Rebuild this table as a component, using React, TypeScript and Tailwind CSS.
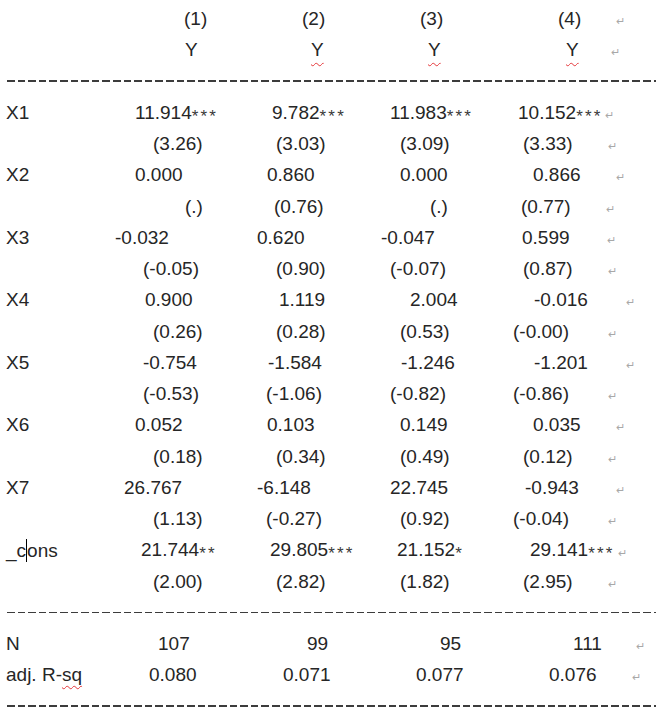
import React from "react";

type Cell = { x: number; t: string; s?: string; wavy?: boolean; caret?: boolean };
type Row = { kind: "text"; cells: Cell[]; ret?: number } | { kind: "dash" };

const rows: Row[] = [
  { kind: "text", cells: [{ x: 184, t: "(1)" }, { x: 302, t: "(2)" }, { x: 420, t: "(3)" }, { x: 558, t: "(4)" }], ret: 616 },
  { kind: "text", cells: [{ x: 185, t: "Y" }, { x: 311, t: "Y", wavy: true }, { x: 428, t: "Y", wavy: true }, { x: 566, t: "Y", wavy: true }], ret: 611 },
  { kind: "dash" },
  { kind: "text", cells: [{ x: 6, t: "X1" }, { x: 135, t: "11.914", s: "***" }, { x: 272, t: "9.782", s: "***" }, { x: 390, t: "11.983", s: "***" }, { x: 518, t: "10.152", s: "***" }], ret: 605 },
  { kind: "text", cells: [{ x: 153, t: "(3.26)" }, { x: 276, t: "(3.03)" }, { x: 400, t: "(3.09)" }, { x: 523, t: "(3.33)" }], ret: 608 },
  { kind: "text", cells: [{ x: 6, t: "X2" }, { x: 135, t: "0.000" }, { x: 267, t: "0.860" }, { x: 400, t: "0.000" }, { x: 533, t: "0.866" }], ret: 616 },
  { kind: "text", cells: [{ x: 185, t: "(.)" }, { x: 274, t: "(0.76)" }, { x: 430, t: "(.)" }, { x: 521, t: "(0.77)" }], ret: 606 },
  { kind: "text", cells: [{ x: 6, t: "X3" }, { x: 115, t: "-0.032" }, { x: 257, t: "0.620" }, { x: 381, t: "-0.047" }, { x: 522, t: "0.599" }], ret: 607 },
  { kind: "text", cells: [{ x: 143, t: "(-0.05)" }, { x: 276, t: "(0.90)" }, { x: 390, t: "(-0.07)" }, { x: 523, t: "(0.87)" }], ret: 608 },
  { kind: "text", cells: [{ x: 6, t: "X4" }, { x: 145, t: "0.900" }, { x: 279, t: "1.119" }, { x: 410, t: "2.004" }, { x: 534, t: "-0.016" }], ret: 626 },
  { kind: "text", cells: [{ x: 153, t: "(0.26)" }, { x: 276, t: "(0.28)" }, { x: 400, t: "(0.53)" }, { x: 513, t: "(-0.00)" }], ret: 608 },
  { kind: "text", cells: [{ x: 6, t: "X5" }, { x: 143, t: "-0.754" }, { x: 268, t: "-1.584" }, { x: 401, t: "-1.246" }, { x: 534, t: "-1.201" }], ret: 626 },
  { kind: "text", cells: [{ x: 143, t: "(-0.53)" }, { x: 266, t: "(-1.06)" }, { x: 390, t: "(-0.82)" }, { x: 513, t: "(-0.86)" }], ret: 608 },
  { kind: "text", cells: [{ x: 6, t: "X6" }, { x: 135, t: "0.052" }, { x: 267, t: "0.103" }, { x: 400, t: "0.149" }, { x: 533, t: "0.035" }], ret: 616 },
  { kind: "text", cells: [{ x: 153, t: "(0.18)" }, { x: 276, t: "(0.34)" }, { x: 400, t: "(0.49)" }, { x: 523, t: "(0.12)" }], ret: 608 },
  { kind: "text", cells: [{ x: 6, t: "X7" }, { x: 124, t: "26.767" }, { x: 257, t: "-6.148" }, { x: 390, t: "22.745" }, { x: 525, t: "-0.943" }], ret: 616 },
  { kind: "text", cells: [{ x: 153, t: "(1.13)" }, { x: 266, t: "(-0.27)" }, { x: 400, t: "(0.92)" }, { x: 513, t: "(-0.04)" }], ret: 608 },
  { kind: "text", cells: [{ x: 6, t: "_cons", caret: true }, { x: 141, t: "21.744", s: "**" }, { x: 270, t: "29.805", s: "***" }, { x: 397, t: "21.152", s: "*" }, { x: 530, t: "29.141", s: "***" }], ret: 618 },
  { kind: "text", cells: [{ x: 153, t: "(2.00)" }, { x: 276, t: "(2.82)" }, { x: 400, t: "(1.82)" }, { x: 523, t: "(2.95)" }], ret: 608 },
  { kind: "dash" },
  { kind: "text", cells: [{ x: 6, t: "N" }, { x: 158, t: "107" }, { x: 307, t: "99" }, { x: 440, t: "95" }, { x: 573, t: "111" }], ret: 636 },
  { kind: "text", cells: [{ x: 6, t: "adj. R-sq" }, { x: 149, t: "0.080" }, { x: 283, t: "0.071" }, { x: 416, t: "0.077" }, { x: 549, t: "0.076" }], ret: 632 },
  { kind: "dash" },
];

function CellView({ c }: { c: Cell }) {
  let content: React.ReactNode = c.t;
  if (c.wavy) {
    content = (
      <span className="underline decoration-wavy decoration-[#e5383b] decoration-1 underline-offset-[6px]">{c.t}</span>
    );
  } else if (c.caret) {
    content = (
      <>
        _c
        <span className="inline-block w-0 h-[23px] border-l border-black align-[-5px]" />
        ons
      </>
    );
  } else if (c.t === "adj. R-sq") {
    content = (
      <>
        adj. R-
        <span className="underline decoration-wavy decoration-[#e5383b] decoration-1 underline-offset-[4px]">sq</span>
      </>
    );
  }
  return (
    <div className="col-start-1 row-start-1 whitespace-nowrap" style={{ paddingLeft: c.x }}>
      {content}
      {c.s ? (
        <span className="relative top-[3px] text-[17px] tracking-[2.2px] text-[#3a3a3a]">{c.s}</span>
      ) : null}
    </div>
  );
}

export default function App() {
  return (
    <div className="w-[656px] h-[721px] bg-white overflow-hidden pt-[3px] text-[19px] leading-[31.25px] text-[#262626] font-['Liberation_Sans',Arial,sans-serif]">
      {rows.map((r, i) =>
        r.kind === "dash" ? (
          <div key={i} className="h-[31.25px] flex items-center pl-[7px]">
            <div className="h-[1.5px] w-full bg-[repeating-linear-gradient(to_right,#3c3c3c_0_7.5px,transparent_7.5px_10.6px)]" />
          </div>
        ) : (
          <div key={i} className="h-[31.25px] grid items-center">
            {r.cells.map((c, j) => (
              <CellView key={j} c={c} />
            ))}
            {r.ret !== undefined ? (
              <div
                className="col-start-1 row-start-1 text-[11px] text-[#a8a8a8] leading-none pt-[6px]"
                style={{ paddingLeft: r.ret }}
              >
                ↵
              </div>
            ) : null}
          </div>
        )
      )}
    </div>
  );
}
